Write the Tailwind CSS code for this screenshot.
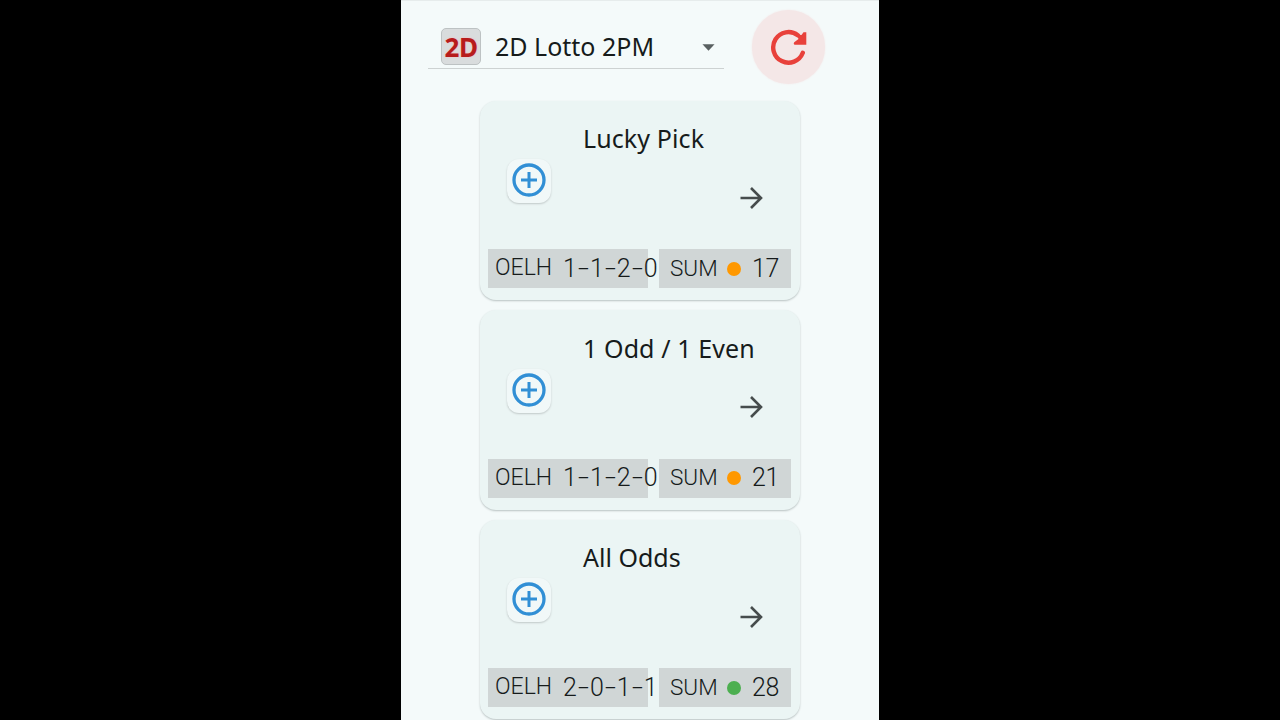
<!DOCTYPE html>
<html lang="en">
<head>
<meta charset="utf-8">
<title>2D Lotto</title>
<script src="https://cdn.jsdelivr.net/npm/@tailwindcss/browser@4"></script>
</head>
<body class="bg-black h-[720px] overflow-hidden flex justify-center font-['Noto_Sans',sans-serif] text-[#161b1b]">
<main class="w-[478px] h-[720px] bg-[#f4fafa] border-t border-[#e6ecec] overflow-hidden flex flex-col items-center">
  <header class="w-full h-[99.500px] shrink-0 flex pl-[27px] pt-[9px]">
    <div class="w-[296px] h-[59px] border-b border-[#cdd2d2] flex items-center pl-[13px] pt-[16px] pb-[1px]">
      <div class="w-[40px] h-[37px] shrink-0 rounded-[5px] border border-[#bdc2c3] bg-[#d9dcdd] flex items-center justify-center font-bold text-[26px] leading-none tracking-[-0.4px] text-[#b71c1c] [text-shadow:0_0_2px_#ffb4b4] pt-[1px]">2D</div>
      <span class="ml-[14px] -mt-[2px] w-[200px] text-[25px] leading-[30px] whitespace-nowrap">2D Lotto 2PM</span>
      <svg class="w-[13px] h-[7px] shrink-0 ml-[7px] mt-[2px]" viewBox="0 0 14 7"><path d="M.5 0h13L7 7z" fill="#596061"/></svg>
    </div>
    <button class="ml-[28px] w-[73px] h-[74px] rounded-full bg-[#f4e7e7] shadow-[0_0_2px_#f4e7e7] flex items-center justify-center">
      <svg class="w-[38px] h-[38px]" viewBox="0 0 38 38" fill="none"><path d="M32.800 24.800A15.300 15.300 0 1 1 27.800 7.200" stroke="#e8413b" stroke-width="4.400" stroke-linecap="round"/><path d="M36.300 4.200v12.600H24.500q-1.500-1-.3-2.500l4.300-3.300-2-4.500 5 .5 2-2.800z" fill="#e8413b"/></svg>
    </button>
  </header>

  <section class="flex flex-col gap-[10px]">
    <article class="w-[320px] h-[199.500px] shrink-0 rounded-[16px] bg-[#ebf5f4] shadow-[0_1px_2px_#b9c2c2] px-[8px] flex flex-col">
      <h2 class="pl-[95px] pt-[21.500px] text-[25px] leading-[32px] whitespace-nowrap tracking-[0.1px]">Lucky Pick</h2>
      <div class="flex justify-between pl-[19px] pr-[29px] pt-[5px] h-[95px]">
        <div class="w-[44px] h-[44px] rounded-[12px] bg-[#f1f8f8] shadow-[0_1px_2px_#c0c8c8] flex items-center justify-center"><svg class="w-[36px] h-[36px] -mt-[2px]" viewBox="0 0 36 36" fill="none" stroke="#318fd5" stroke-width="3.300"><circle cx="18" cy="18" r="15"/><path d="M18 10v16M10 18h16" stroke-width="3"/></svg></div>
        <svg class="w-[24px] h-[24px] mt-[26.500px]" viewBox="0 0 24 24" fill="none" stroke="#464c4c" stroke-width="2.600"><path d="M1.500 12h20M12 2l10 10-10 10"/></svg>
      </div>
      <div class="flex gap-[11px] h-[39px] whitespace-nowrap font-['Roboto',sans-serif] font-light">
        <div class="w-[160px] bg-[#d0d6d6] flex items-center pl-[7px]"><span class="w-[68px] shrink-0 text-[23px]">OELH</span><span class="text-[25px]">1<b class="inline-block w-[13px] text-center font-light scale-x-160">-</b>1<b class="inline-block w-[13px] text-center font-light scale-x-160">-</b>2<b class="inline-block w-[13px] text-center font-light scale-x-160">-</b>0</span></div>
        <div class="w-[132px] bg-[#d0d6d6] flex items-center pl-[11px]"><span class="w-[57px] shrink-0 text-[22.500px]">SUM</span><i class="w-[14px] h-[14px] rounded-full bg-[#ff9800]"></i><span class="ml-[11px] text-[25px] tracking-[-0.3px]">17</span></div>
      </div>
    </article>
    <article class="w-[320px] h-[199.500px] shrink-0 rounded-[16px] bg-[#ebf5f4] shadow-[0_1px_2px_#b9c2c2] px-[8px] flex flex-col">
      <h2 class="pl-[95px] pt-[21.500px] text-[25px] leading-[32px] whitespace-nowrap tracking-[0.1px]">1 Odd / 1 Even</h2>
      <div class="flex justify-between pl-[19px] pr-[29px] pt-[5px] h-[95px]">
        <div class="w-[44px] h-[44px] rounded-[12px] bg-[#f1f8f8] shadow-[0_1px_2px_#c0c8c8] flex items-center justify-center"><svg class="w-[36px] h-[36px] -mt-[2px]" viewBox="0 0 36 36" fill="none" stroke="#318fd5" stroke-width="3.300"><circle cx="18" cy="18" r="15"/><path d="M18 10v16M10 18h16" stroke-width="3"/></svg></div>
        <svg class="w-[24px] h-[24px] mt-[26.500px]" viewBox="0 0 24 24" fill="none" stroke="#464c4c" stroke-width="2.600"><path d="M1.500 12h20M12 2l10 10-10 10"/></svg>
      </div>
      <div class="flex gap-[11px] h-[39px] whitespace-nowrap font-['Roboto',sans-serif] font-light">
        <div class="w-[160px] bg-[#d0d6d6] flex items-center pl-[7px]"><span class="w-[68px] shrink-0 text-[23px]">OELH</span><span class="text-[25px]">1<b class="inline-block w-[13px] text-center font-light scale-x-160">-</b>1<b class="inline-block w-[13px] text-center font-light scale-x-160">-</b>2<b class="inline-block w-[13px] text-center font-light scale-x-160">-</b>0</span></div>
        <div class="w-[132px] bg-[#d0d6d6] flex items-center pl-[11px]"><span class="w-[57px] shrink-0 text-[22.500px]">SUM</span><i class="w-[14px] h-[14px] rounded-full bg-[#ff9800]"></i><span class="ml-[11px] text-[25px] tracking-[-0.3px]">21</span></div>
      </div>
    </article>
    <article class="w-[320px] h-[199.500px] shrink-0 rounded-[16px] bg-[#ebf5f4] shadow-[0_1px_2px_#b9c2c2] px-[8px] flex flex-col">
      <h2 class="pl-[95px] pt-[21.500px] text-[25px] leading-[32px] whitespace-nowrap">All Odds</h2>
      <div class="flex justify-between pl-[19px] pr-[29px] pt-[5px] h-[95px]">
        <div class="w-[44px] h-[44px] rounded-[12px] bg-[#f1f8f8] shadow-[0_1px_2px_#c0c8c8] flex items-center justify-center"><svg class="w-[36px] h-[36px] -mt-[2px]" viewBox="0 0 36 36" fill="none" stroke="#318fd5" stroke-width="3.300"><circle cx="18" cy="18" r="15"/><path d="M18 10v16M10 18h16" stroke-width="3"/></svg></div>
        <svg class="w-[24px] h-[24px] mt-[26.500px]" viewBox="0 0 24 24" fill="none" stroke="#464c4c" stroke-width="2.600"><path d="M1.500 12h20M12 2l10 10-10 10"/></svg>
      </div>
      <div class="flex gap-[11px] h-[39px] whitespace-nowrap font-['Roboto',sans-serif] font-light">
        <div class="w-[160px] bg-[#d0d6d6] flex items-center pl-[7px]"><span class="w-[68px] shrink-0 text-[23px]">OELH</span><span class="text-[25px]">2<b class="inline-block w-[13px] text-center font-light scale-x-160">-</b>0<b class="inline-block w-[13px] text-center font-light scale-x-160">-</b>1<b class="inline-block w-[13px] text-center font-light scale-x-160">-</b>1</span></div>
        <div class="w-[132px] bg-[#d0d6d6] flex items-center pl-[11px]"><span class="w-[57px] shrink-0 text-[22.500px]">SUM</span><i class="w-[14px] h-[14px] rounded-full bg-[#4caf50]"></i><span class="ml-[11px] text-[25px] tracking-[-0.3px]">28</span></div>
      </div>
    </article>
  </section>
</main>
</body>
</html>
